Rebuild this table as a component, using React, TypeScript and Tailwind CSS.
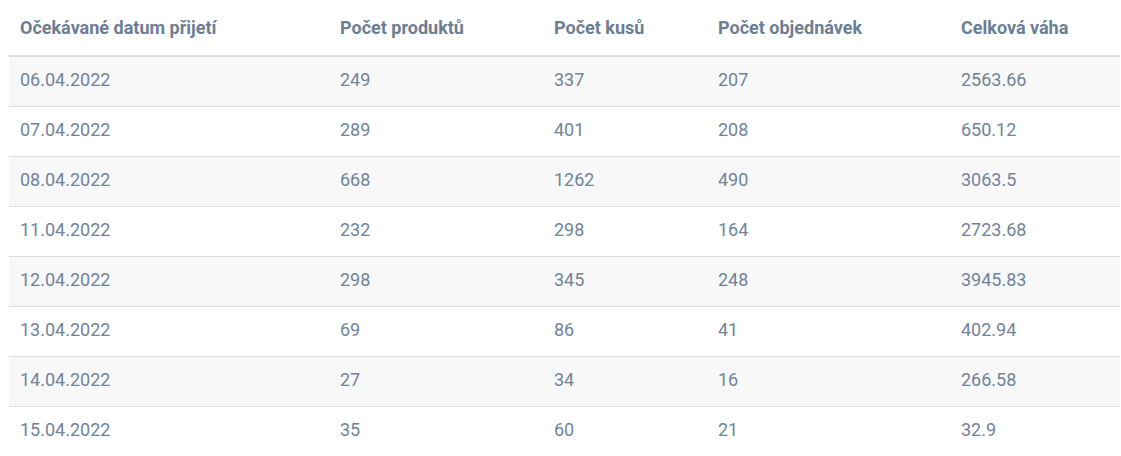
const headers = [
  "Očekávané datum přijetí",
  "Počet produktů",
  "Počet kusů",
  "Počet objednávek",
  "Celková váha",
];

const rows = [
  ["06.04.2022", "249", "337", "207", "2563.66"],
  ["07.04.2022", "289", "401", "208", "650.12"],
  ["08.04.2022", "668", "1262", "490", "3063.5"],
  ["11.04.2022", "232", "298", "164", "2723.68"],
  ["12.04.2022", "298", "345", "248", "3945.83"],
  ["13.04.2022", "69", "86", "41", "402.94"],
  ["14.04.2022", "27", "34", "16", "266.58"],
  ["15.04.2022", "35", "60", "21", "32.9"],
];

const widths = ["w-[320px]", "w-[214px]", "w-[164px]", "w-[243px]", ""];

export default function App() {
  return (
    <div className="bg-white pl-[9px] pr-px font-['Roboto',sans-serif]">
      <table className="w-full border-collapse text-left text-[18px]">
        <thead>
          <tr className="h-[56px] border-b-2 border-[#dddddd]">
            {headers.map((h, i) => (
              <th key={h} className={`${widths[i]} px-[11px] align-middle font-bold text-[#6b7e94]`}>
                {h}
              </th>
            ))}
          </tr>
        </thead>
        <tbody>
          {rows.map((r, ri) => (
            <tr
              key={r[0]}
              className={`h-[50px] border-b border-[#dddddd] ${ri % 2 === 0 ? "bg-[#f8f8f8]" : "bg-white"}`}
            >
              {r.map((c, ci) => (
                <td key={ci} className="px-[11px] pb-[4px] align-middle text-[#71849a]">
                  {c}
                </td>
              ))}
            </tr>
          ))}
        </tbody>
      </table>
    </div>
  );
}
